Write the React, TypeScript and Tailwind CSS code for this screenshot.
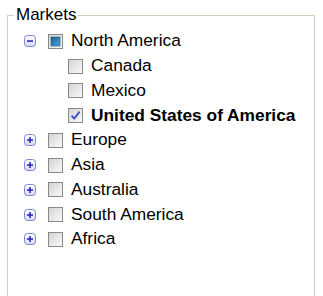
import React from 'react';

type Node = {
    label: string;
    state: 'none' | 'mixed' | 'checked';
    open?: boolean;
    children?: Node[];
};

const tree: Node[] = [
    {
        label: "North America",
        state: "mixed",
        open: true,
        children: [
            { label: "Canada", state: "none" },
            { label: "Mexico", state: "none" },
            { label: "United States of America", state: "checked" },
        ],
    },
    { label: "Europe", state: "none", children: [] },
    { label: "Asia", state: "none", children: [] },
    { label: "Australia", state: "none", children: [] },
    { label: "South America", state: "none", children: [] },
    { label: "Africa", state: "none", children: [] },
];

const Expander = ({ open }: { open?: boolean }) => (
    <svg width="12" height="12" viewBox="0 0 12 12" className="shrink-0">
        <defs>
            <linearGradient id={open ? "exo" : "exc"} x1="0" y1="0" x2="0" y2="1">
                <stop offset="0" stopColor="#ffffff" />
                <stop offset="1" stopColor="#d2d8f4" />
            </linearGradient>
        </defs>
        <rect x="0.5" y="0.5" width="11" height="11" rx="3" fill={`url(#${open ? "exo" : "exc"})`} stroke="#7f85d4" />
        <rect x="3" y="5.3" width="6" height="1.5" fill="#2323b4" />
        {!open && <rect x="5.25" y="3" width="1.5" height="6" fill="#2323b4" />}
    </svg>
);

const Check = ({ state }: { state: Node['state'] }) => (
    <svg width="15" height="15" viewBox="0 0 15 15" className="shrink-0">
        <defs>
            <linearGradient id="cbg" x1="0" y1="0" x2="1" y2="1">
                <stop offset="0" stopColor="#d2d2d2" />
                <stop offset="1" stopColor="#fbfbfb" />
            </linearGradient>
            <linearGradient id="cbm" x1="0" y1="0" x2="1" y2="1">
                <stop offset="0" stopColor="#1c5f93" />
                <stop offset="1" stopColor="#4aa6d6" />
            </linearGradient>
        </defs>
        <rect x="0.5" y="0.5" width="14" height="14" fill="url(#cbg)" stroke="#888a8a" />
        {state === 'mixed' && (
            <rect x="3" y="3" width="9" height="9" fill="url(#cbm)" stroke="#17507e" strokeWidth="0.6" />
        )}
        {state === 'checked' && (
            <path d="M3.6 7.6 L6.2 10.6 L11.6 3.6" fill="none" stroke="#3a4fc4" strokeWidth="1.8" strokeLinejoin="round" />
        )}
    </svg>
);

const App: React.FC = () => {
    return (
        <div className="w-[323px] h-[296px] overflow-hidden bg-white text-black font-['Liberation_Sans',Arial,sans-serif]">
            <fieldset className="ml-[7px] mt-[5px] w-[308px] h-[320px] border border-[#d0d0bf]">
                <legend className="ml-[6px] px-[2px] text-[17px] leading-[20px]">Markets</legend>

                <div className="flex flex-col pl-[16px] pt-[4px]">
                    {tree.map(node => (
                        <div key={node.label}>
                            <div className="flex items-center h-[24.75px] text-[17.33px]">
                                <Expander open={node.open} />
                                <div className="ml-[12px]">
                                    <Check state={node.state} />
                                </div>
                                <span className="ml-[8px]">{node.label}</span>
                            </div>
                            {node.open && node.children && node.children.map(child => (
                                <div key={child.label} className="flex items-center h-[24.75px] text-[17.33px] pl-[44px]">
                                    <Check state={child.state} />
                                    <span className={`ml-[8px] ${child.state === 'checked' ? 'font-bold' : ''}`}>{child.label}</span>
                                </div>
                            ))}
                        </div>
                    ))}
                </div>
            </fieldset>
        </div>
    );
};

export default App;
